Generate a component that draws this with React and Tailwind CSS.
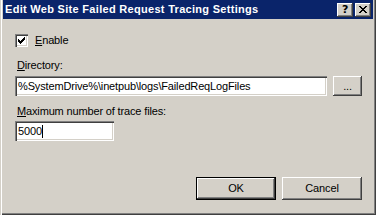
import React from 'react'

const raised = 'shadow-[inset_-1px_-1px_0_#404040,inset_1px_1px_0_#ffffff,inset_-2px_-2px_0_#808080]'
const sunken = 'shadow-[inset_1px_1px_0_#808080,inset_2px_2px_0_#404040,inset_-1px_-1px_0_#ffffff,inset_-2px_-2px_0_#d4d0c8]'

function CloseGlyph() {
  return (
    <svg width="8" height="7" viewBox="0 0 8 7" shapeRendering="crispEdges">
      <path d="M0 0h2v1h-2zM6 0h2v1h-2zM1 1h2v1h-2zM5 1h2v1h-2zM2 2h4v1h-4zM3 3h2v1h-2zM2 4h4v1h-4zM1 5h2v1h-2zM5 5h2v1h-2zM0 6h2v1h-2zM6 6h2v1h-2z" fill="#000" />
    </svg>
  )
}

function CheckGlyph() {
  return (
    <svg width="7" height="7" viewBox="0 0 7 7" shapeRendering="crispEdges">
      <path d="M6 0h1v3h-1zM5 1h1v3h-1zM4 2h1v3h-1zM3 3h1v3h-1zM2 4h1v3h-1zM1 3h1v3h-1zM0 2h1v3h-1z" fill="#000" />
    </svg>
  )
}

function TitleButton({ children }) {
  return (
    <div className={`w-[16px] h-[14px] bg-[#d4d0c8] flex items-center justify-center ${raised}`}>
      {children}
    </div>
  )
}

function Button({ children, isDefault }) {
  return (
    <div className={`w-[80px] h-[23px] flex items-center justify-center bg-[#d4d0c8] ${isDefault ? 'border border-black' : ''}`}>
      <div className={`w-full h-full flex items-center justify-center ${raised}`}>{children}</div>
    </div>
  )
}

export default function App() {
  return (
    <div
      className="w-[376px] h-[215px] bg-[#d4d0c8] flex flex-col px-[3px] pb-[3px] shadow-[inset_1px_0_0_#d4d0c8,inset_2px_0_0_#ffffff,inset_-1px_-1px_0_#404040,inset_-2px_-2px_0_#808080] text-black overflow-hidden tracking-[-0.15px]"
      style={{ fontFamily: '"Liberation Sans", Arial, sans-serif', fontSize: 11 }}
    >
      {/* Title bar */}
      <div className="h-[19px] bg-[#0a246a] flex items-center justify-between pl-[2px] pr-[2px]">
        <span className="text-white font-bold text-[11px] leading-none tracking-[0.3px]">
          Edit Web Site Failed Request Tracing Settings
        </span>
        <div className="flex gap-[2px]">
          <TitleButton>
            <span className="font-bold text-[11px] leading-none" style={{ fontFamily: '"DejaVu Sans", sans-serif' }}>?</span>
          </TitleButton>
          <TitleButton>
            <CloseGlyph />
          </TitleButton>
        </div>
      </div>

      {/* Body */}
      <div className="flex-1 flex flex-col pl-[12px] pr-[11px]">
        <div className="flex items-center gap-[7px] mt-[15px] h-[13px]">
          <div className={`w-[13px] h-[13px] bg-white flex items-center justify-center ${sunken}`}>
            <CheckGlyph />
          </div>
          <span className="leading-none"><u className="underline-offset-1">E</u>nable</span>
        </div>

        <div className="mt-[13px] pl-[2px] leading-none h-[13px]">
          <u className="underline-offset-1">D</u>irectory:
        </div>
        <div className="flex items-center mt-[3px] gap-[6px]">
          <div className={`w-[312px] h-[20px] bg-white flex items-center pl-[3px] ${sunken}`}>
            %SystemDrive%\inetpub\logs\FailedReqLogFiles
          </div>
          <div className={`w-[29px] h-[20px] flex items-center justify-center ${raised}`}>...</div>
        </div>

        <div className="mt-[10px] pl-[2px] leading-none h-[13px]">
          <u className="underline-offset-1">M</u>aximum number of trace files:
        </div>
        <div className={`mt-[2px] w-[99px] h-[20px] bg-white flex items-center pl-[3px] ${sunken}`}>
          5000<span className="w-px h-[13px] bg-black" />
        </div>

        <div className="flex-1" />
        <div className="flex justify-end gap-[6px] mb-[12px]">
          <Button isDefault>OK</Button>
          <Button>Cancel</Button>
        </div>
      </div>
    </div>
  )
}
